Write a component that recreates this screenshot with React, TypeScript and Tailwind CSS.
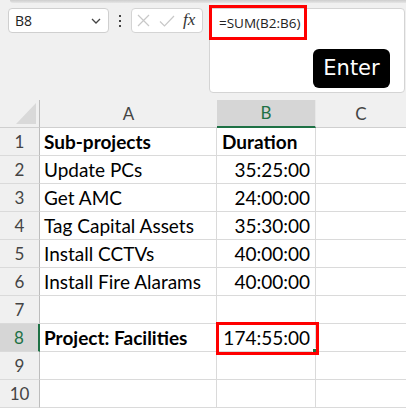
import React from "react";

const rows: { a: string; b: string; bold?: boolean; left?: boolean }[] = [
  { a: "Sub-projects", b: "Duration", bold: true, left: true },
  { a: "Update PCs", b: "35:25:00" },
  { a: "Get AMC", b: "24:00:00" },
  { a: "Tag Capital Assets", b: "35:30:00" },
  { a: "Install CCTVs", b: "40:00:00" },
  { a: "Install Fire Alarams", b: "40:00:00" },
  { a: "", b: "" },
  { a: "Project: Facilities", b: "174:55:00", bold: true },
  { a: "", b: "" },
  { a: "", b: "" },
];

export default function App() {
  return (
    <div className="relative w-[406px] h-[408px] overflow-hidden bg-[#f0f0f0] font-['Lato',sans-serif]">
      {/* top area */}
      <div className="h-[100px]">
        <div className="ml-[10px] h-[3px] rounded-bl-[3px] bg-gradient-to-b from-[#cdcdcd] to-[#e6e6e6]" />
        <div className="flex items-start pl-[8px] mt-[5px]">
          {/* name box */}
          <div className="w-[101px] h-[25px] bg-white border border-[#cfcfcf] rounded-[4px] flex items-center justify-between pl-[6px] pr-[7px]">
            <span className="text-[14px] text-[#222] font-['Open_Sans',sans-serif] leading-none">B8</span>
            <svg width="10" height="6" viewBox="0 0 10 6" className="mt-[1px]">
              <path d="M1 1 L5 5 L9 1" stroke="#444" strokeWidth="1.3" fill="none" />
            </svg>
          </div>
          {/* dots */}
          <div className="w-[22px] h-[25px] flex flex-col items-center justify-center gap-[3px]">
            <div className="w-[2px] h-[2px] bg-[#444]" />
            <div className="w-[2px] h-[2px] bg-[#444]" />
            <div className="w-[2px] h-[2px] bg-[#444]" />
          </div>
          {/* fx box */}
          <div className="w-[72px] h-[25px] bg-white border border-[#d4d4d4] rounded-[4px] flex items-center pl-[5px]">
            <svg width="13" height="13" viewBox="0 0 13 13">
              <path d="M1 1 L12 12 M12 1 L1 12" stroke="#c8c8c8" strokeWidth="1.2" fill="none" />
            </svg>
            <svg width="16" height="12" viewBox="0 0 16 12" className="ml-[9px]">
              <path d="M1 6.5 L5.5 11 L15 1" stroke="#c8c8c8" strokeWidth="1.2" fill="none" />
            </svg>
            <span className="ml-[8px] text-[17px] italic text-[#333] font-['Liberation_Serif',serif] leading-none -mt-[2px]">fx</span>
          </div>
          {/* formula bar */}
          <div className="ml-[6px] w-[196px] h-[85px] bg-white border border-[#d4d4d4] rounded-[4px] pl-[9px] pt-[6px]">
            <div className="text-[13.5px] leading-[16px] text-[#222] font-['Open_Sans',sans-serif] whitespace-nowrap">=SUM(B2:B6)</div>
          </div>
        </div>
      </div>

      {/* grid */}
      <div className="grid grid-cols-[40px_177px_99px_90px]">
        {/* header row */}
        <div className="h-[28px] border-r border-[#bdbdbd] border-b border-b-[#cfcfcf] flex items-end justify-end pr-[3px] pb-[3px]">
          <svg width="20" height="21" viewBox="0 0 20 21">
            <path d="M20 0 L20 21 L0 21 Z" fill="#d9d9d9" />
          </svg>
        </div>
        <div className="h-[28px] border-b border-[#cfcfcf] flex items-center justify-center text-[17px] text-[#444]">A</div>
        <div className="h-[28px] bg-[#d6d6d6] border-b-2 border-[#1e7145] border-r border-r-[#e8e8e8] flex items-center justify-center text-[17px] text-[#1e7145]">B</div>
        <div className="h-[28px] border-b border-[#cfcfcf] flex items-center justify-center text-[17px] text-[#444]">C</div>

        {rows.map((r, i) => {
          const sel = i === 7;
          return (
            <React.Fragment key={i}>
              <div
                className={
                  sel
                    ? "h-[28px] bg-[#d6d6d6] border-r-2 border-[#1e7145] border-b border-b-[#dadada] flex items-center justify-center text-[17px] text-[#1e7145]"
                    : "h-[28px] border-r border-[#bdbdbd] border-b border-b-[#dadada] flex items-center justify-center text-[17px] text-[#444]"
                }
              >
                {i + 1}
              </div>
              <div
                className={
                  "h-[28px] bg-white border-r border-b border-[#dadada] pl-[4px] leading-[28px] text-[19px] text-black whitespace-nowrap " +
                  (r.bold ? "font-bold" : "")
                }
              >
                {r.a}
              </div>
              <div
                className={
                  "h-[28px] bg-white border-r border-b border-[#dadada] leading-[28px] text-[19px] text-black whitespace-nowrap " +
                  (r.left ? "pl-[5px] text-left " : "pr-[5px] text-right ") +
                  (r.bold && r.left ? "font-bold" : "")
                }
              >
                {r.b}
              </div>
              <div className="h-[28px] bg-white border-b border-[#dadada]" />
            </React.Fragment>
          );
        })}
      </div>

      {/* overlays */}
      <div className="absolute left-[209px] top-[5px] w-[98px] h-[35px] border-[3px] border-[#ff0000]" />
      <div className="absolute left-[313px] top-[49px] w-[77px] h-[39px] bg-black rounded-[6px] flex items-center justify-center">
        <span className="text-white text-[21px] font-['DejaVu_Sans',sans-serif] leading-none">Enter</span>
      </div>
      {/* selection of B8 */}
      <div className="absolute left-[216px] top-[324px] w-[2px] h-[28px] bg-[#1e7145]" />
      <div className="absolute left-[312px] top-[348px] w-[5px] h-[5px] bg-[#1e7145] border border-white" />
      <div className="absolute left-[216px] top-[322px] w-[103px] h-[33px] border-[3px] border-[#ff0000]" />
    </div>
  );
}
